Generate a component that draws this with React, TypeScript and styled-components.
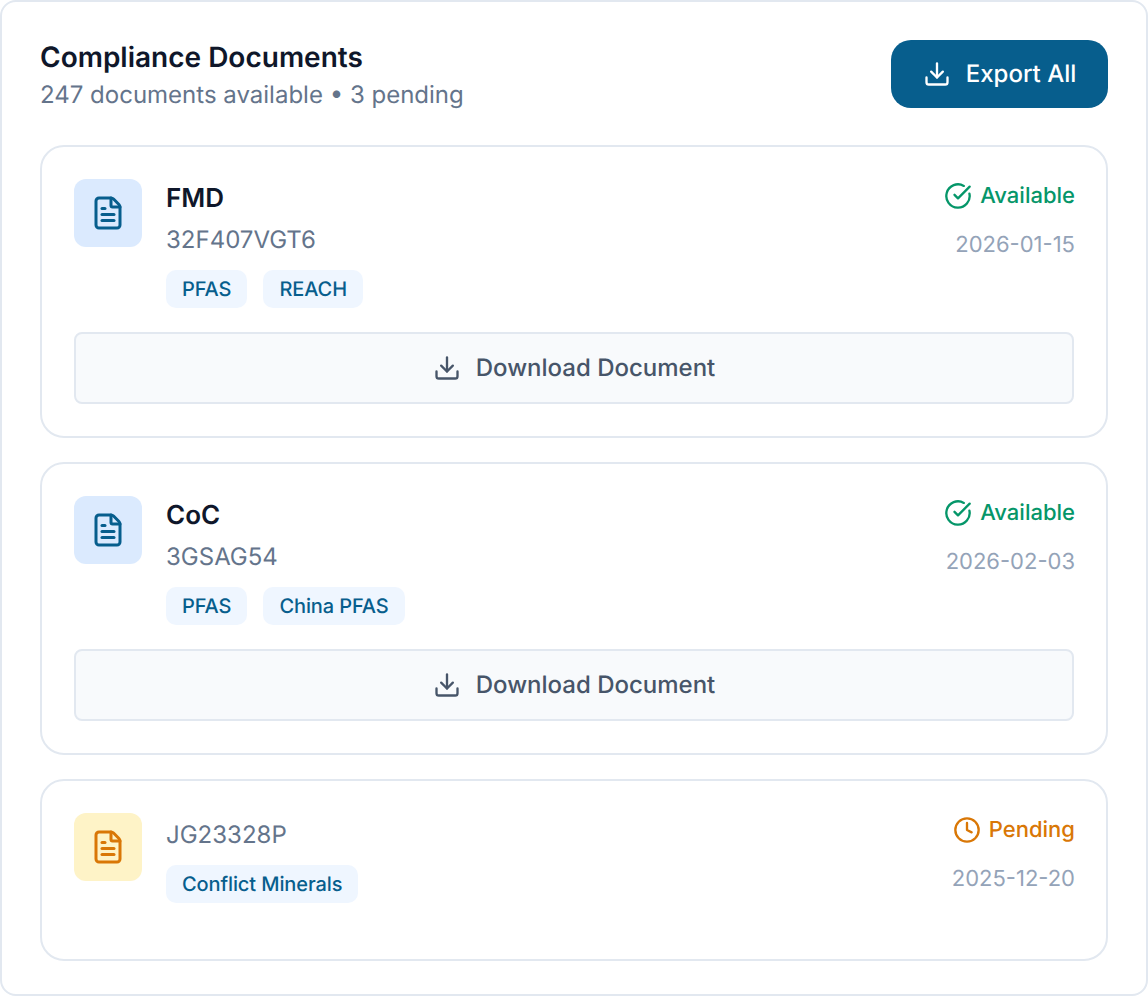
import React from "react";
import styled, { createGlobalStyle } from "styled-components";
import { CircleCheckBig, Clock, Download, FileText } from "lucide-react";

const Global = createGlobalStyle`
  html, body { margin: 0; padding: 0; background: #fff; }
  * { box-sizing: border-box; }
  body {
    font-family: Inter, "Liberation Sans", sans-serif;
    text-rendering: geometricPrecision;
    -webkit-font-smoothing: antialiased;
  }
`;

const Panel = styled.div`
  width: 1148px;
  height: 996px;
  border: 2px solid #e2e8f0;
  border-radius: 16px;
  background: #fff;
  padding: 38px;
  display: flex;
  flex-direction: column;
`;

const Header = styled.header`
  display: flex;
  justify-content: space-between;
  align-items: flex-start;
  margin-bottom: 32px;
`;

const Title = styled.h2`
  margin: 0 0 3px;
  font-size: 28px;
  line-height: 34px;
  font-weight: 600;
  color: #0f172a;
`;

const Subtitle = styled.p`
  margin: 0;
  font-size: 24px;
  line-height: 36px;
  color: #64748b;
`;

const ButtonLabel = styled.span`
  margin-bottom: 2px;
`;

const ExportButton = styled.button`
  width: 217px;
  height: 68px;
  border: 0;
  border-radius: 20px;
  background: #075e8d;
  color: #fff;
  font: 500 24px Inter, sans-serif;
  text-rendering: geometricPrecision;
  display: flex;
  align-items: center;
  justify-content: center;
  gap: 15px;
`;

const List = styled.div`
  display: flex;
  flex-direction: column;
  gap: 24px;
`;

const Card = styled.article`
  border: 2px solid #e2e8f0;
  border-radius: 24px;
  padding: 32px;
  display: flex;
  flex-direction: column;
`;

const Top = styled.div`
  display: flex;
  justify-content: space-between;
  margin-bottom: 24px;
`;

const Left = styled.div`
  display: flex;
  gap: 24px;
`;

const IconBox = styled.div<{ $pending?: boolean }>`
  width: 68px;
  height: 68px;
  border-radius: 12px;
  background: ${(p) => (p.$pending ? "#fef3c7" : "#dbeafe")};
  color: ${(p) => (p.$pending ? "#d97706" : "#075e8d")};
  display: flex;
  align-items: center;
  justify-content: center;
`;

const Info = styled.div`
  display: flex;
  flex-direction: column;
`;

const Name = styled.div`
  font-size: 26px;
  line-height: 39px;
  font-weight: 600;
  color: #0f172a;
`;

const Code = styled.div`
  font-size: 24px;
  line-height: 36px;
  color: #64748b;
  margin: 4px 0 12px;
`;

const Tags = styled.div`
  display: flex;
  gap: 16px;
`;

const Tag = styled.span`
  height: 38px;
  padding: 0 16px;
  border-radius: 10px;
  background: #eff6ff;
  color: #075e8d;
  font-size: 20px;
  font-weight: 500;
  line-height: 38px;
  letter-spacing: -0.1px;
`;

const Right = styled.div`
  display: flex;
  flex-direction: column;
  align-items: flex-end;
  gap: 17px;
  margin-right: -1px;
`;

const Status = styled.div<{ $pending?: boolean }>`
  display: flex;
  align-items: center;
  gap: 8px;
  height: 33px;
  font-size: 22px;
  font-weight: 500;
  color: ${(p) => (p.$pending ? "#d97706" : "#059669")};
`;

const DateText = styled.div`
  font-size: 22px;
  line-height: 33px;
  color: #94a3b8;
`;

const DownloadButton = styled.button`
  height: 72px;
  width: 100%;
  border: 2px solid #e2e8f0;
  border-radius: 8px;
  background: #f8fafc;
  color: #475569;
  font: 500 24px Inter, sans-serif;
  text-rendering: geometricPrecision;
  display: flex;
  align-items: center;
  justify-content: center;
  gap: 15px;
`;

type Doc = {
  name?: string;
  code: string;
  tags: string[];
  date: string;
  pending?: boolean;
};

const docs: Doc[] = [
  { name: "FMD", code: "32F407VGT6", tags: ["PFAS", "REACH"], date: "2026-01-15" },
  { name: "CoC", code: "3GSAG54", tags: ["PFAS", "China PFAS"], date: "2026-02-03" },
  { code: "JG23328P", tags: ["Conflict Minerals"], date: "2025-12-20", pending: true },
];

export default function App() {
  return (
    <>
      <Global />
      <Panel>
        <Header>
          <div>
            <Title>Compliance Documents</Title>
            <Subtitle>247 documents available • 3 pending</Subtitle>
          </div>
          <ExportButton>
            <Download size={28} strokeWidth={2} />
            <ButtonLabel>Export All</ButtonLabel>
          </ExportButton>
        </Header>
        <List>
          {docs.map((d) => (
            <Card key={d.code}>
              <Top>
                <Left>
                  <IconBox $pending={d.pending}>
                    <FileText size={36} strokeWidth={2} />
                  </IconBox>
                  <Info>
                    {d.name && <Name>{d.name}</Name>}
                    <Code>{d.code}</Code>
                    <Tags>
                      {d.tags.map((t) => (
                        <Tag key={t}>{t}</Tag>
                      ))}
                    </Tags>
                  </Info>
                </Left>
                <Right>
                  <Status $pending={d.pending}>
                    {d.pending ? <Clock size={28} /> : <CircleCheckBig size={28} />}
                    {d.pending ? "Pending" : "Available"}
                  </Status>
                  <DateText>{d.date}</DateText>
                </Right>
              </Top>
              {!d.pending && (
                <DownloadButton>
                  <Download size={28} />
                  <ButtonLabel>Download Document</ButtonLabel>
                </DownloadButton>
              )}
            </Card>
          ))}
        </List>
      </Panel>
    </>
  );
}
